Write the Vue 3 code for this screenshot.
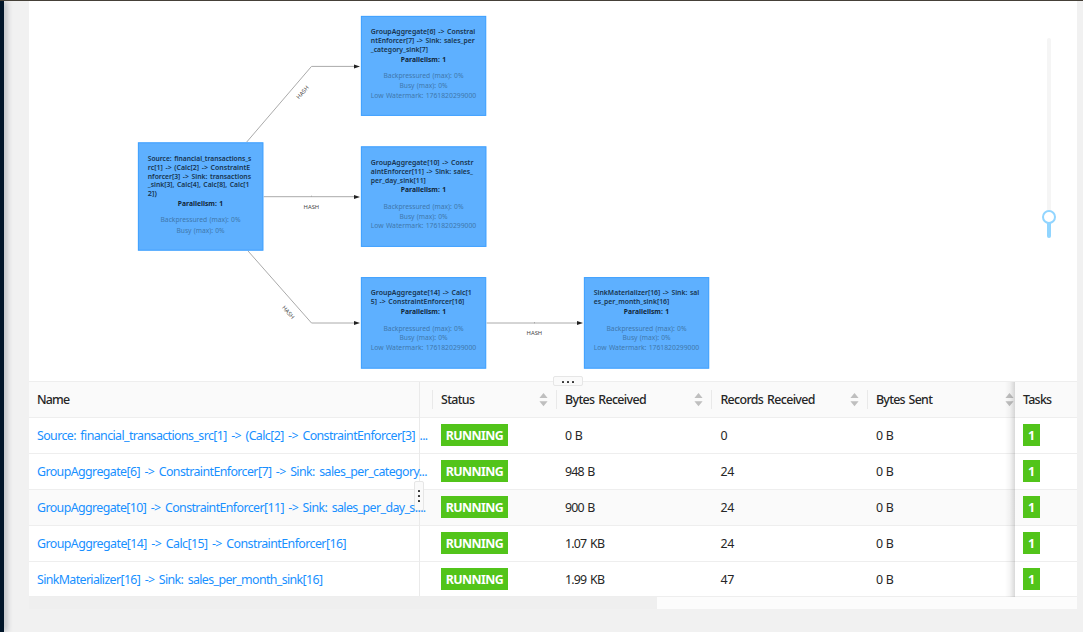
<script setup>
const vFit = {
  mounted(el, { value }) {
    const natural = el.getBoundingClientRect().width
    el.style.letterSpacing = (value - natural) / el.textContent.length + 'px'
  },
}

const metricsA = [
  { t: 'Backpressured (max): 0%', w: 80 },
  { t: 'Busy (max): 0%', w: 48 },
  { t: 'Low Watermark: 1761820299000', w: 105.4 },
]

const nodes = [
  {
    x: 138.4, y: 142.8, w: 124.5, h: 107.4, tx: 147.8,
    lines: [
      { t: 'Source: financial_transactions_s', w: 103.6, y: 161.1 },
      { t: 'rc[1] -> (Calc[2] -> ConstraintE', w: 102.4, y: 170 },
      { t: 'nforcer[3] -> Sink: transactions', w: 103.2, y: 178.9 },
      { t: '_sink[3], Calc[4], Calc[8], Calc[1', w: 101.6, y: 187 },
      { t: '2])', w: 9, y: 195.9 },
    ],
    par: 206, my: [222, 233],
  },
  {
    x: 361.4, y: 16.4, w: 124.3, h: 99, tx: 370.8,
    lines: [
      { t: 'GroupAggregate[6] -> Constrai', w: 104.4, y: 34.1 },
      { t: 'ntEnforcer[7] -> Sink: sales_per', w: 103.8, y: 43.1 },
      { t: '_category_sink[7]', w: 57.2, y: 52 },
    ],
    par: 62, my: [78.1, 88, 97.9],
  },
  {
    x: 361.4, y: 146.8, w: 124.5, h: 99.6, tx: 370.8,
    lines: [
      { t: 'GroupAggregate[10] -> Constr', w: 102.6, y: 165.1 },
      { t: 'aintEnforcer[11] -> Sink: sales_', w: 102.2, y: 174 },
      { t: 'per_day_sink[11]', w: 55, y: 182.9 },
    ],
    par: 192, my: [209.1, 218.9, 228],
  },
  {
    x: 361.4, y: 277.6, w: 124.3, h: 90.6, tx: 370.8,
    lines: [
      { t: 'GroupAggregate[14] -> Calc[1', w: 101, y: 295.1 },
      { t: '5] -> ConstraintEnforcer[16]', w: 93.6, y: 304 },
    ],
    par: 314, my: [331, 340, 349.9],
  },
  {
    x: 584.4, y: 277.6, w: 124.3, h: 90.6, tx: 593.8,
    lines: [
      { t: 'SinkMaterializer[16] -> Sink: sal', w: 105.4, y: 295.1 },
      { t: 'es_per_month_sink[16]', w: 75.4, y: 304 },
    ],
    par: 314, my: [331, 340, 349.9],
  },
]

const edges = [
  'M246.3 142.5L311.5 66.4H356',
  'M263.5 196.7H356M311.5 195.7V197',
  'M247.6 250.5L311.5 323H356',
  'M486.5 323H579M534.5 322V323.4',
]
const arrows = [[360, 66.4], [360, 196.9], [360, 323], [583, 323]]
const labels = [
  { x: 302.6, y: 92.3, r: -49 },
  { x: 311.4, y: 206.8, r: 0 },
  { x: 288.4, y: 312.2, r: 49 },
  { x: 534.4, y: 332.9, r: 0 },
]

const headers = [
  { t: 'Name', w: 32.4 },
  { t: 'Status', w: 33.4, sort: true },
  { t: 'Bytes Received', w: 81, sort: true },
  { t: 'Records Received', w: 94.4, sort: true },
  { t: 'Bytes Sent', w: 56.2, sort: true },
  { t: 'Tasks', w: 28.4 },
]
const rows = [
  { name: 'Source: financial_transactions_src[1] -> (Calc[2] -> ConstraintEnforcer[3] ...', w: 390.6, bytes: '0 B', bw: 16.8, rec: '0', rw: 7 },
  { name: 'GroupAggregate[6] -> ConstraintEnforcer[7] -> Sink: sales_per_category...', w: 390, bytes: '948 B', bw: 29.6, rec: '24', rw: 13.6 },
  { name: 'GroupAggregate[10] -> ConstraintEnforcer[11] -> Sink: sales_per_day_s....', w: 388.6, bytes: '900 B', bw: 29.6, rec: '24', rw: 13.6, hover: true },
  { name: 'GroupAggregate[14] -> Calc[15] -> ConstraintEnforcer[16]', w: 309, bytes: '1.07 KB', bw: 39.2, rec: '24', rw: 13.6 },
  { name: 'SinkMaterializer[16] -> Sink: sales_per_month_sink[16]', w: 285.4, bytes: '1.99 KB', bw: 39.2, rec: '47', rw: 13.6 },
]
</script>

<template>
  <div class="page">
    <div class="sider"></div>
    <main class="panel">
      <div class="graph">
        <svg width="1048" height="381" viewBox="29 0 1048 381">
          <path v-for="d in edges" :key="d" :d="d" class="edge" />
          <path v-for="(a, i) in arrows" :key="i" :d="`M${a[0]} ${a[1]}l-6-2v4z`" class="arrow" />
          <text v-for="l in labels" :key="l.x" class="hash" :transform="`translate(${l.x} ${l.y}) rotate(${l.r})`" y="2.1" textLength="15.6" lengthAdjust="spacingAndGlyphs">HASH</text>
          <g v-for="n in nodes" :key="n.tx + n.y">
            <rect :x="n.x - .6" :y="n.y - .6" :width="n.w + 1.2" :height="n.h + 1.2" class="halo" />
            <rect :x="n.x" :y="n.y" :width="n.w" :height="n.h" class="box" />
            <text v-for="l in n.lines" :key="l.t" class="title" :x="n.tx" :y="l.y" :textLength="l.w" lengthAdjust="spacingAndGlyphs">{{ l.t }}</text>
            <text class="title par" :x="n.tx + 52.7" :y="n.par" textLength="45.4" lengthAdjust="spacingAndGlyphs">Parallelism: 1</text>
            <text v-for="(y, i) in n.my" :key="y" class="metric" :x="n.tx + 52.7" :y="y" :textLength="metricsA[i].w" lengthAdjust="spacingAndGlyphs">{{ metricsA[i].t }}</text>
          </g>
        </svg>
        <div class="slider"><i class="fill"></i><i class="knob"></i></div>
      </div>
      <div class="list">
        <div class="row head">
          <div v-for="h in headers" :key="h.t" class="cell">
            <span v-fit="h.w">{{ h.t }}</span>
            <svg v-if="h.sort" class="sort" width="9" height="14" viewBox="0 0 9 14"><path d="M4.5 0L8.6 5H.4zM.4 8.2H8.6L4.5 13.2z" /></svg>
          </div>
        </div>
        <div v-for="r in rows" :key="r.name" class="row" :class="{ hover: r.hover }">
          <div class="cell"><a v-fit="r.w">{{ r.name }}</a></div>
          <div class="cell"><span class="tag"><b v-fit="57.4">RUNNING</b></span></div>
          <div class="cell"><span v-fit="r.bw">{{ r.bytes }}</span></div>
          <div class="cell"><span v-fit="r.rw">{{ r.rec }}</span></div>
          <div class="cell"><span v-fit="16.8">0 B</span></div>
          <div class="cell"><span class="tag one"><b>1</b></span></div>
        </div>
        <div class="scroll"><div class="thumb"></div></div>
        <div class="shade"></div>
        <div class="split"></div>
        <div class="grip tall"><i></i><i></i><i></i></div>
        <div class="grip wide"><i></i><i></i><i></i></div>
      </div>
    </main>
  </div>
</template>

<style>
body { margin: 0; overflow: hidden; }
</style>

<style scoped>
.page { box-sizing: border-box; width: 1083px; height: 632px; background: #f1f1f1; border-top: 1px solid #454038; display: flex; font-family: "Noto Sans", "Open Sans", sans-serif; font-size: 12.4px; color: #262626; overflow: hidden; }
.sider { width: 4px; height: 100%; background: #001529; box-shadow: 2px 0 6px rgba(0, 21, 41, .38); margin-right: 25px; flex: none; }
.panel { width: 1048px; height: 608px; background: #fff; }
.graph { display: flow-root; height: 380px; position: relative; }
.graph > svg { display: block; margin-top: -1px; }
.edge { fill: none; stroke: #aaa; stroke-width: 1; }
.arrow { fill: #222; }
.halo { fill: #cbe8ff; }
.box { fill: #5eb0ff; stroke: #3d9fff; stroke-width: 1; }
.title { font-size: 6.8px; font-weight: 600; fill: #17344f; word-spacing: .8px; }
.par { text-anchor: middle; font-weight: 700; fill: #102538; }
.metric { font-size: 6.9px; fill: #4078ad; text-anchor: middle; word-spacing: .5px; }
.hash { font-size: 5.6px; fill: #444; text-anchor: middle; }
.slider { position: absolute; left: 1018px; top: 37px; width: 4px; height: 200px; border-radius: 2px; background: #f5f5f5; }
.fill { position: absolute; left: 0; bottom: 0; width: 4px; height: 21px; border-radius: 2px; background: #91d5ff; }
.knob { position: absolute; box-sizing: border-box; left: -5px; top: 172px; width: 14px; height: 14px; border: 2px solid #91d5ff; border-radius: 50%; background: #fff; }
.list { position: relative; height: 228px; }
.row { box-sizing: border-box; height: 36px; border-bottom: 1px solid #eee; display: grid; grid-template-columns: 404px 124px 155.4px 155.6px 147px 62px; }
.row.head { height: 37px; border-top: 1px solid #eee; background: #fafafa; font-weight: 500; }
.row.hover { background: #fafafa; }
.row:nth-child(6) { height: 35px; }
.cell { height: 35px; padding-left: 8px; display: flex; align-items: center; white-space: nowrap; position: relative; }
.cell span, .cell a { flex: none; word-spacing: 1.2px; }
.cell a { color: #1890ff; position: relative; z-index: 2; word-spacing: 1.8px; }
.head .cell:nth-child(n+2):nth-child(-n+5)::before { content: ""; position: absolute; left: -1px; top: 8px; width: 1px; height: 19px; background: #e9e9e9; }
.sort { position: absolute; right: 9px; top: 11px; fill: #bfbfbf; }
.head .cell:nth-child(5) .sort { right: 1px; }
.tag { box-sizing: border-box; height: 22px; width: 67px; margin-bottom: 1px; background: #52c41a; color: #fff; display: flex; align-items: center; justify-content: center; }
.tag b { font-weight: 700; }
.tag.one { width: 17px; }
.scroll { height: 12px; background: #fcfcfc; }
.thumb { width: 628px; height: 12px; background: #efefef; }
.shade { position: absolute; left: 976px; top: 1px; width: 10px; height: 215px; background: linear-gradient(to right, transparent, rgba(0, 0, 0, .04) 50%, rgba(0, 0, 0, .15)); }
.split { position: absolute; left: 390px; top: 1px; width: 1px; height: 214px; background: #eaeaea; }
.grip { position: absolute; box-sizing: border-box; display: flex; align-items: center; justify-content: center; gap: 2.6px; background: #fafafa; border: 1px solid #e6e6e6; border-radius: 2px; }
.grip i { width: 2px; height: 2px; background: #333; border-radius: .5px; }
.wide { left: 524px; top: -5px; width: 30px; height: 10px; padding-top: 2px; }
.tall { left: 385px; top: 100px; width: 10px; height: 30px; flex-direction: column; }
</style>
